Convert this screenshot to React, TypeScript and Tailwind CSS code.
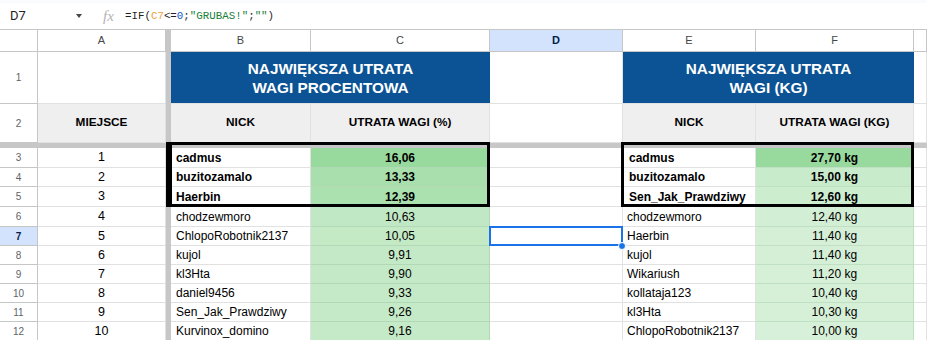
const left = [
  { n: 1, nick: 'cadmus', val: '16,06', bg: 'bg-[#98d99e]' },
  { n: 2, nick: 'buzitozamalo', val: '13,33', bg: 'bg-[#a8dfac]' },
  { n: 3, nick: 'Haerbin', val: '12,39', bg: 'bg-[#abe0af]' },
  { n: 4, nick: 'chodzewmoro', val: '10,63', bg: 'bg-[#c1e8c4]' },
  { n: 5, nick: 'ChlopoRobotnik2137', val: '10,05', bg: 'bg-[#c3e9c5]' },
  { n: 6, nick: 'kujol', val: '9,91', bg: 'bg-[#c4e9c6]' },
  { n: 7, nick: 'kl3Hta', val: '9,90', bg: 'bg-[#c4e9c6]' },
  { n: 8, nick: 'daniel9456', val: '9,33', bg: 'bg-[#c5eac7]' },
  { n: 9, nick: 'Sen_Jak_Prawdziwy', val: '9,26', bg: 'bg-[#c5eac7]' },
  { n: 10, nick: 'Kurvinox_domino', val: '9,16', bg: 'bg-[#c5eac7]' },
]

const right = [
  { nick: 'cadmus', val: '27,70 kg', bg: 'bg-[#98d99e]' },
  { nick: 'buzitozamalo', val: '15,00 kg', bg: 'bg-[#c8ebcb]' },
  { nick: 'Sen_Jak_Prawdziwy', val: '12,60 kg', bg: 'bg-[#cdedcf]' },
  { nick: 'chodzewmoro', val: '12,40 kg', bg: 'bg-[#d2eed4]' },
  { nick: 'Haerbin', val: '11,40 kg', bg: 'bg-[#d4efd6]' },
  { nick: 'kujol', val: '11,40 kg', bg: 'bg-[#d4efd6]' },
  { nick: 'Wikariush', val: '11,20 kg', bg: 'bg-[#d5f0d7]' },
  { nick: 'kollataja123', val: '10,40 kg', bg: 'bg-[#d6f0d8]' },
  { nick: 'kl3Hta', val: '10,30 kg', bg: 'bg-[#d6f0d8]' },
  { nick: 'ChlopoRobotnik2137', val: '10,00 kg', bg: 'bg-[#d7f0d9]' },
]

const cell = 'border-r border-b border-[#e1e1e1] flex items-center overflow-hidden whitespace-nowrap'
const head = 'border-r border-b border-[#c4c7c5] flex items-center justify-center text-[11px] text-[#444746]'
const rowHead = 'border-r border-b border-[#c4c7c5] flex items-center justify-center text-[10px] text-[#5f6368] bg-white'
const colTitle = cell + ' bg-[#efefef] justify-center font-bold text-[11.8px]'

export default function App() {
  return (
    <div className="w-[927px] h-[340px] overflow-hidden bg-white text-[#000] font-['Liberation_Sans',Arial,sans-serif]">
      {/* Formula bar */}
      <div className="h-[3px] bg-[#f9fbfd]" />
      <div className="h-[27px] flex items-center border-b border-[#c4c7c5]">
        <div className="w-[70px] pl-[10px] text-[13px] text-[#1f1f1f] font-['Roboto',sans-serif]">D7</div>
        <div className="w-0 h-0 border-l-[3px] border-r-[3px] border-t-[4px] border-l-transparent border-r-transparent border-t-[#444746] ml-[6px]" />
        <div className="ml-[21px] w-[14px] text-[15px] italic text-[#b3b3b3] font-['Liberation_Serif',serif] leading-none">fx</div>
        <div className="ml-[8px] text-[10.8px] font-['Liberation_Mono',monospace] text-[#1f1f1f]">
          =IF(<span className="text-[#f09f3c]">C7</span>&lt;=<span className="text-[#1155cc]">0</span>;<span className="text-[#188038]">"GRUBAS!"</span>;<span className="text-[#188038]">""</span>)
        </div>
      </div>

      <div className="relative">
        <div className="grid grid-cols-[38px_128px_5px_140px_179px_133px_133px_158px_1fr] grid-rows-[22px_52px_39px_5px_20px_19px_20px_20px_19px_19px_19px_19px_19px_19px]">
          {/* freeze bars */}
          <div className="col-start-3 row-span-full bg-[#c7c7c7]" />
          <div className="row-start-4 col-span-full bg-[#c7c7c7]" />

          {/* column headers */}
          <div className={head} />
          <div className={head}>A</div>
          <div className={head}>B</div>
          <div className={head}>C</div>
          <div className={head + ' bg-[#d3e3fd] font-bold !text-[#041e49]'}>D</div>
          <div className={head}>E</div>
          <div className={head}>F</div>
          <div className={head} />

          {/* row 1 */}
          <div className={rowHead}>1</div>
          <div className={cell} />
          <div className="col-span-2 bg-[#0b5394] border-b border-[#e1e1e1] flex items-center justify-center text-center text-white font-bold text-[15.3px] leading-[19px]">
            NAJWIĘKSZA UTRATA<br />WAGI PROCENTOWA
          </div>
          <div className={cell} />
          <div className="col-span-2 bg-[#0b5394] border-b border-[#e1e1e1] flex items-center justify-center text-center text-white font-bold text-[15.3px] leading-[19px]">
            NAJWIĘKSZA UTRATA<br />WAGI (KG)
          </div>
          <div className={cell} />

          {/* row 2 */}
          <div className={rowHead}>2</div>
          <div className={colTitle}>MIEJSCE</div>
          <div className={colTitle}>NICK</div>
          <div className={colTitle}>UTRATA WAGI (%)</div>
          <div className={cell} />
          <div className={colTitle}>NICK</div>
          <div className={colTitle}>UTRATA WAGI (KG)</div>
          <div className={cell} />

          {/* data rows */}
          {left.map((l, i) => {
            const r = right[i]
            const rowNum = i + 3
            const bold = i < 3 ? 'font-bold' : ''
            const sel = rowNum === 7
            return [
              <div key={'h' + i} className={rowHead + (sel ? ' !bg-[#d3e3fd] font-bold !text-[#041e49]' : '')}>{rowNum}</div>,
              <div key={'a' + i} className={cell + ' justify-center text-[12.5px]'}>{l.n}</div>,
              <div key={'b' + i} className={cell + ' pl-[5px] text-[12px] ' + bold}>{l.nick}</div>,
              <div key={'c' + i} className={cell + ' justify-center text-[12px] !border-[#b3d8b6] ' + l.bg + ' ' + bold}>{l.val}</div>,
              <div key={'d' + i} className={cell} />,
              <div key={'e' + i} className={cell + ' text-[12px] ' + (i < 3 ? 'pl-[6px] ' : 'pl-[4px] ') + bold}>{r.nick}</div>,
              <div key={'f' + i} className={cell + ' justify-center text-[12px] !border-[#c0e0c3] ' + r.bg + ' ' + bold}>{r.val}</div>,
              <div key={'g' + i} className={cell} />,
            ]
          })}
        </div>

        {/* top-3 boxes */}
        <div className="absolute left-[166px] top-[112px] w-[324px] h-[65px] border-[3px] border-l-[6px] border-black pointer-events-none" />
        <div className="absolute left-[621px] top-[112px] w-[293px] h-[65px] border-[3px] border-black pointer-events-none" />

        {/* selection D7 */}
        <div className="absolute left-[489px] top-[196px] w-[134px] h-[20px] border-2 border-[#1a73e8] pointer-events-none" />
        <div className="absolute left-[618px] top-[212px] w-[8px] h-[8px] rounded-full bg-[#1a73e8] border border-white" />
      </div>
    </div>
  )
}
